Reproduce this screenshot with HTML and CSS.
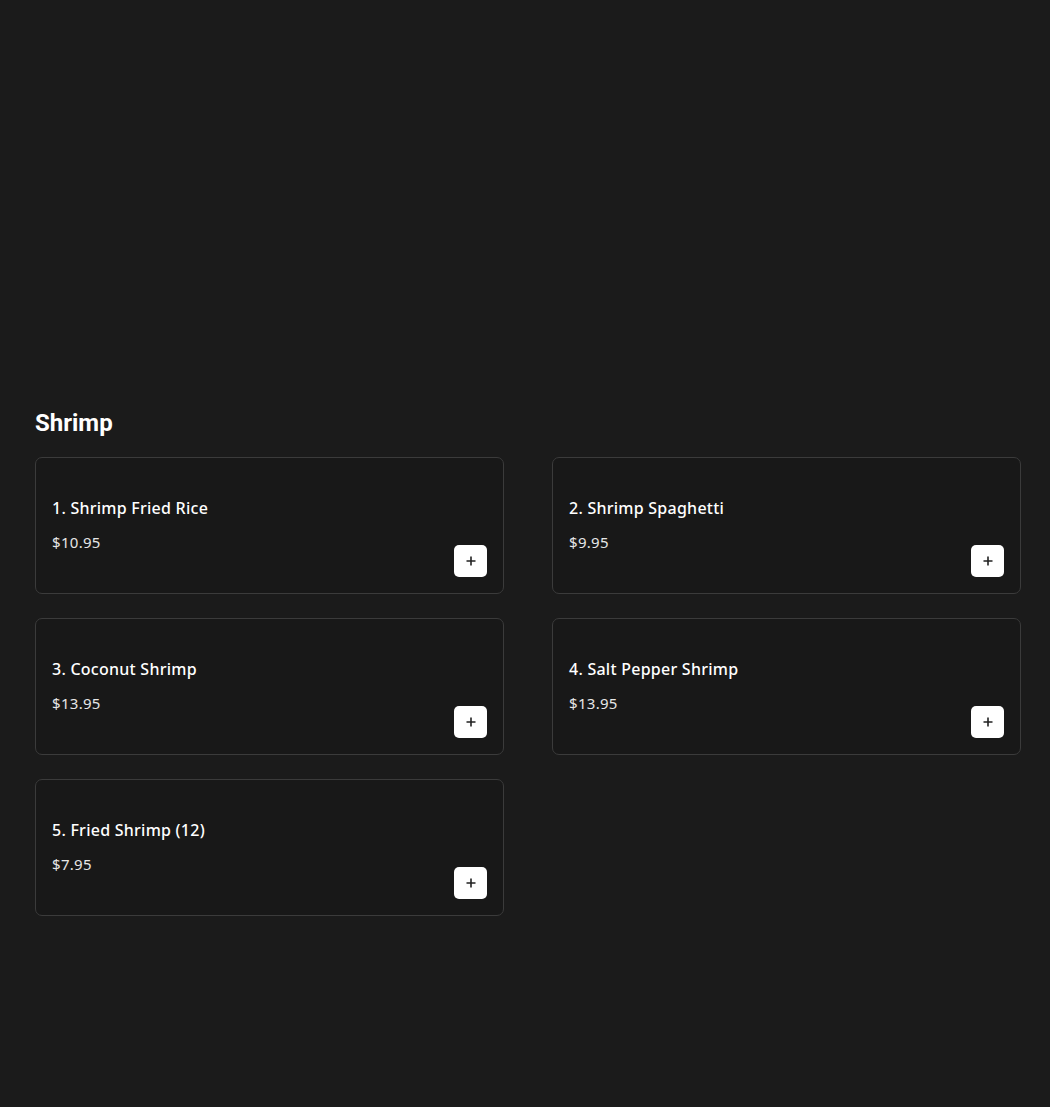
FILE: index.html
```html
<!DOCTYPE html>
<html>
<head>
<meta charset="utf-8">
<link rel="stylesheet" href="styles.css">
</head>
<body>
<main class="page">
  <section class="category">
    <h2 class="category-title">Shrimp</h2>
    <div class="grid">
      <div class="card">
        <div class="info"><div class="name">1. Shrimp Fried Rice</div><div class="price">$10.95</div></div>
        <button class="add"><svg viewBox="0 0 12 12" width="12" height="12"><path d="M6 1.5v9M1.5 6h9" stroke="#222" stroke-width="1.6" fill="none"/></svg></button>
      </div>
      <div class="card">
        <div class="info"><div class="name">2. Shrimp Spaghetti</div><div class="price">$9.95</div></div>
        <button class="add"><svg viewBox="0 0 12 12" width="12" height="12"><path d="M6 1.5v9M1.5 6h9" stroke="#222" stroke-width="1.6" fill="none"/></svg></button>
      </div>
      <div class="card">
        <div class="info"><div class="name">3. Coconut Shrimp</div><div class="price">$13.95</div></div>
        <button class="add"><svg viewBox="0 0 12 12" width="12" height="12"><path d="M6 1.5v9M1.5 6h9" stroke="#222" stroke-width="1.6" fill="none"/></svg></button>
      </div>
      <div class="card">
        <div class="info"><div class="name">4. Salt Pepper Shrimp</div><div class="price">$13.95</div></div>
        <button class="add"><svg viewBox="0 0 12 12" width="12" height="12"><path d="M6 1.5v9M1.5 6h9" stroke="#222" stroke-width="1.6" fill="none"/></svg></button>
      </div>
      <div class="card">
        <div class="info"><div class="name">5. Fried Shrimp (12)</div><div class="price">$7.95</div></div>
        <button class="add"><svg viewBox="0 0 12 12" width="12" height="12"><path d="M6 1.5v9M1.5 6h9" stroke="#222" stroke-width="1.6" fill="none"/></svg></button>
      </div>
    </div>
  </section>
</main>
</body>
</html>
```

FILE: styles.css
```css
html, body {
  margin: 0;
  padding: 0;
  background: #1b1b1b;
}
body {
  min-height: 1107px;
  font-family: "Noto Sans", "DejaVu Sans", sans-serif;
  color: #f2f2f2;
}
.page {
  padding: 405px 30px 0 35px;
}
.category-title {
  margin: 0 0 16px 0;
  font-family: Roboto, "Liberation Sans", sans-serif;
  font-weight: 700;
  font-size: 24px;
  line-height: 36px;
  color: #ffffff;
}
.grid {
  display: grid;
  grid-template-columns: 469px 469px;
  column-gap: 48px;
  row-gap: 24px;
}
.card {
  box-sizing: border-box;
  height: 137px;
  border: 1px solid #3b3b3b;
  border-radius: 7px;
  background: #181818;
  padding: 16px;
  display: flex;
  justify-content: space-between;
  align-items: flex-end;
}
.info {
  align-self: flex-start;
  padding-top: 22px;
  display: flex;
  flex-direction: column;
  gap: 10px;
}
.name {
  font-size: 16px;
  line-height: 24px;
  font-weight: 500;
  color: #ffffff;
  letter-spacing: 0.25px;
}
.price {
  font-size: 15px;
  line-height: 24px;
  color: #e6e6e6;
  letter-spacing: 0.3px;
}
.add {
  width: 33px;
  height: 32px;
  border: none;
  border-radius: 5px;
  background: #ffffff;
  padding: 0;
  display: flex;
  align-items: center;
  justify-content: center;
  cursor: pointer;
}
```
